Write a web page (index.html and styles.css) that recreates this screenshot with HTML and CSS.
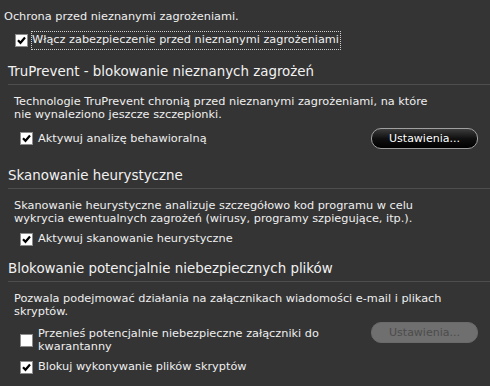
FILE: index.html
```html
<!DOCTYPE html>
<html lang="pl">
<head>
<meta charset="utf-8">
<link rel="stylesheet" href="styles.css">
</head>
<body>
<div class="page">
  <p class="intro">Ochrona przed nieznanymi zagrożeniami.</p>
  <div class="row top-row">
    <span class="cb checked"><svg viewBox="0 0 11 11"><path d="M2 5.2 L4.5 7.8 L9 2.5" /></svg></span>
    <span class="focus">Włącz zabezpieczenie przed nieznanymi zagrożeniami</span>
  </div>

  <section class="group first">
    <h2>TruPrevent - blokowanie nieznanych zagrożeń</h2>
    <div class="body">
      <p>Technologie TruPrevent chronią przed nieznanymi zagrożeniami, na które<br>nie wynaleziono jeszcze szczepionki.</p>
      <div class="row opt with-btn">
        <span class="cb checked"><svg viewBox="0 0 11 11"><path d="M2 5.2 L4.5 7.8 L9 2.5" /></svg></span>
        <span class="label">Aktywuj analizę behawioralną</span>
        <button class="btn">Ustawienia...</button>
      </div>
    </div>
  </section>

  <section class="group after-btn">
    <h2>Skanowanie heurystyczne</h2>
    <div class="body">
      <p>Skanowanie heurystyczne analizuje szczegółowo kod programu w celu<br>wykrycia ewentualnych zagrożeń (wirusy, programy szpiegujące, itp.).</p>
      <div class="row opt">
        <span class="cb checked"><svg viewBox="0 0 11 11"><path d="M2 5.2 L4.5 7.8 L9 2.5" /></svg></span>
        <span class="label">Aktywuj skanowanie heurystyczne</span>
      </div>
    </div>
  </section>

  <section class="group">
    <h2>Blokowanie potencjalnie niebezpiecznych plików</h2>
    <div class="body">
      <p>Pozwala podejmować działania na załącznikach wiadomości e-mail i plikach<br>skryptów.</p>
      <div class="row opt two">
        <span class="cb"></span>
        <span class="label">Przenieś potencjalnie niebezpieczne załączniki do<br>kwarantanny</span>
        <button class="btn disabled">Ustawienia...</button>
      </div>
      <div class="row opt last">
        <span class="cb checked"><svg viewBox="0 0 11 11"><path d="M2 5.2 L4.5 7.8 L9 2.5" /></svg></span>
        <span class="label">Blokuj wykonywanie plików skryptów</span>
      </div>
    </div>
  </section>
</div>
</body>
</html>
```

FILE: styles.css
```css
html, body {
  margin: 0;
  padding: 0;
  background: #343434;
}
body {
  width: 490px;
  height: 386px;
  overflow: hidden;
  font-family: "DejaVu Sans", Verdana, sans-serif;
  font-size: 11.3px;
  color: #efefef;
}
.page {
  padding: 10px 0 0 4px;
}
p {
  margin: 0;
  line-height: 13px;
}
.intro {
  line-height: 14px;
}
.row {
  display: flex;
  align-items: center;
}
.top-row {
  margin: 8px 0 0 11px;
  gap: 4px;
  height: 17px;
}
.cb {
  width: 11px;
  height: 11px;
  background: #fff;
  border: 1px solid #8c8c8c;
  box-sizing: content-box;
  display: flex;
  align-items: center;
  justify-content: center;
  flex: none;
}
.cb svg {
  width: 11px;
  height: 11px;
}
.cb svg path {
  fill: none;
  stroke: #000;
  stroke-width: 2.2;
}
.focus {
  outline: 1px dotted #cfcfcf;
  outline-offset: 0;
  padding: 1px 1px 2px 0;
  line-height: 14px;
}
.group {
  margin-top: 14px;
}
.group.after-btn {
  margin-top: 18px;
}
.group h2 {
  margin: 0 0 0 4px;
  font-size: 13.4px;
  font-weight: normal;
  line-height: 18px;
  padding-bottom: 3px;
  border-bottom: 1px solid #4e4e4e;
  color: #f2f2f2;
}
.body {
  padding: 10px 12px 0 10px;
}
.opt {
  margin: 7px 0 0 6px;
  gap: 5px;
  line-height: 14px;
}
.label {
  flex: 1;
}
.with-btn {
  height: 21px;
}
.two {
  margin-top: 9px;
  line-height: 13px;
}
.two .btn {
  align-self: flex-start;
  margin-top: -5px;
}
.last {
  margin-top: 7px;
}
.btn {
  width: 107px;
  height: 21px;
  border-radius: 10px;
  border: 1px solid #a0a0a0;
  background: linear-gradient(#3c3c3c, #101010 50%, #000);
  color: #fff;
  font-family: "DejaVu Sans", Verdana, sans-serif;
  font-size: 11px;
  padding: 0;
  flex: none;
}
.btn.disabled {
  background: #6f6f6f;
  border-color: #6a6a6a;
  color: #4c4c4c;
}
```
